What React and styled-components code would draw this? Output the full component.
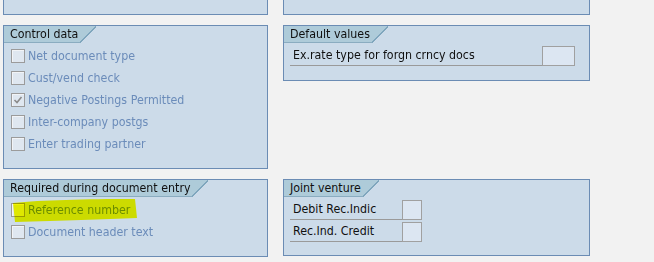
import styled, { createGlobalStyle } from "styled-components";

const GlobalStyle = createGlobalStyle`
    body{
        margin: 0;
        background: #f2f2f2;
        font-family: "DejaVu Sans Condensed", "DejaVu Sans", sans-serif;
        font-size: 12.3px;
    }
`

const controlRows = [
    { label: 'Net document type', checked: false },
    { label: 'Cust/vend check', checked: false },
    { label: 'Negative Postings Permitted', checked: true },
    { label: 'Inter-company postgs', checked: false },
    { label: 'Enter trading partner', checked: false },
]

function CheckRow({ label, checked }){
    return (
        <Row>
            <Box>{checked && <svg width="10" height="10" viewBox="0 0 10 10"><path d="M1.5 5 L4 7.5 L8.5 2" stroke="#8a8a8a" strokeWidth="1.6" fill="none"/></svg>}</Box>
            <DisabledText>{label}</DisabledText>
        </Row>
    )
}

function Field({ label, width, inputWidth }){
    return (
        <FieldRow>
            <FieldLabel width={width}>{label}</FieldLabel>
            <Input width={inputWidth}/>
        </FieldRow>
    )
}

export default function App(){
    return (
        <>
            <GlobalStyle/>
            <Page>
                <Panel cut side='left'/>
                <Panel cut side='right'/>

                <Panel side='left' height={144}>
                    <Tab>Control data</Tab>
                    <Checks>
                        {controlRows.map(r => <CheckRow key={r.label} {...r}/>)}
                    </Checks>
                </Panel>
                <Panel side='right' height={56}>
                    <Tab>Default values</Tab>
                    <Fields>
                        <Field label='Ex.rate type for forgn crncy docs' width={252} inputWidth={33}/>
                    </Fields>
                </Panel>

                <Panel side='left' height={78}>
                    <Tab>Required during document entry</Tab>
                    <Checks>
                        <CheckRow label='Reference number'/>
                        <CheckRow label='Document header text'/>
                    </Checks>
                    <Highlight width="126" height="26" viewBox="0 0 126 26">
                        <path d="M0 5 C30 2 70 1 122 1 L124 20 C90 21 50 23 2 24 Z" fill="#ffff00"/>
                    </Highlight>
                </Panel>
                <Panel side='right' height={77}>
                    <Tab>Joint venture</Tab>
                    <Fields>
                        <Field label='Debit Rec.Indic' width={112} inputWidth={20}/>
                        <Field label='Rec.Ind. Credit' width={112} inputWidth={20}/>
                    </Fields>
                </Panel>
            </Page>
        </>
    )
}

const Page = styled.div`
    display: grid;
    grid-template-columns: 265px 307px;
    column-gap: 15px;
    row-gap: 10px;
    align-items: start;
    padding-left: 3px;
`

const Panel = styled.div`
    position: relative;
    box-sizing: border-box;
    background: #ccdbe9;
    border: 1px solid #6b8cb4;
    border-top: ${props => props.cut ? 'none' : '1px solid #6b8cb4'};
    height: ${props => props.cut ? '15px' : props.height + 'px'};
`

const Tab = styled.div`
    position: relative;
    display: inline-block;
    box-sizing: border-box;
    height: 17px;
    line-height: 17px;
    padding: 0 2px 0 6px;
    margin-right: 17px;
    background: #aecbd9;
    border-bottom: 1px solid #8aacc0;
    color: #101010;
    &::after{
        content: '';
        position: absolute;
        top: 0;
        right: -16px;
        width: 16px;
        height: 17px;
        background: linear-gradient(to bottom right, #aecbd9 0 47%, #7fa6bd 47% 53%, transparent 53%);
    }
`

const Checks = styled.div`
    display: flex;
    flex-direction: column;
    padding: 2px 0 0 7px;
`

const Row = styled.div`
    display: flex;
    align-items: center;
    gap: 3px;
    height: 22px;
`

const Box = styled.div`
    display: flex;
    align-items: center;
    justify-content: center;
    box-sizing: border-box;
    width: 14px;
    height: 14px;
    border: 1px solid #9b9b9b;
    box-shadow: inset 1px 1px 0 #f2f4f7;
    background: #dfe7f0;
`

const DisabledText = styled.span`
    color: #6b8cba;
`

const Fields = styled.div`
    display: flex;
    flex-direction: column;
    gap: 2px;
    padding: 3px 0 0 6px;
`

const FieldRow = styled.div`
    display: flex;
    align-items: flex-end;
`

const FieldLabel = styled.div`
    box-sizing: border-box;
    width: ${props => props.width}px;
    height: 20px;
    line-height: 19px;
    padding-left: 3px;
    border-bottom: 1px solid #9a9a9a;
    color: #101010;
`

const Input = styled.div`
    box-sizing: border-box;
    width: ${props => props.width}px;
    height: 20px;
    border: 1px solid #a0a0a0;
    background: #dce6f2;
`

const Highlight = styled.svg`
    position: absolute;
    left: 9px;
    top: 18px;
    mix-blend-mode: multiply;
    pointer-events: none;
`
